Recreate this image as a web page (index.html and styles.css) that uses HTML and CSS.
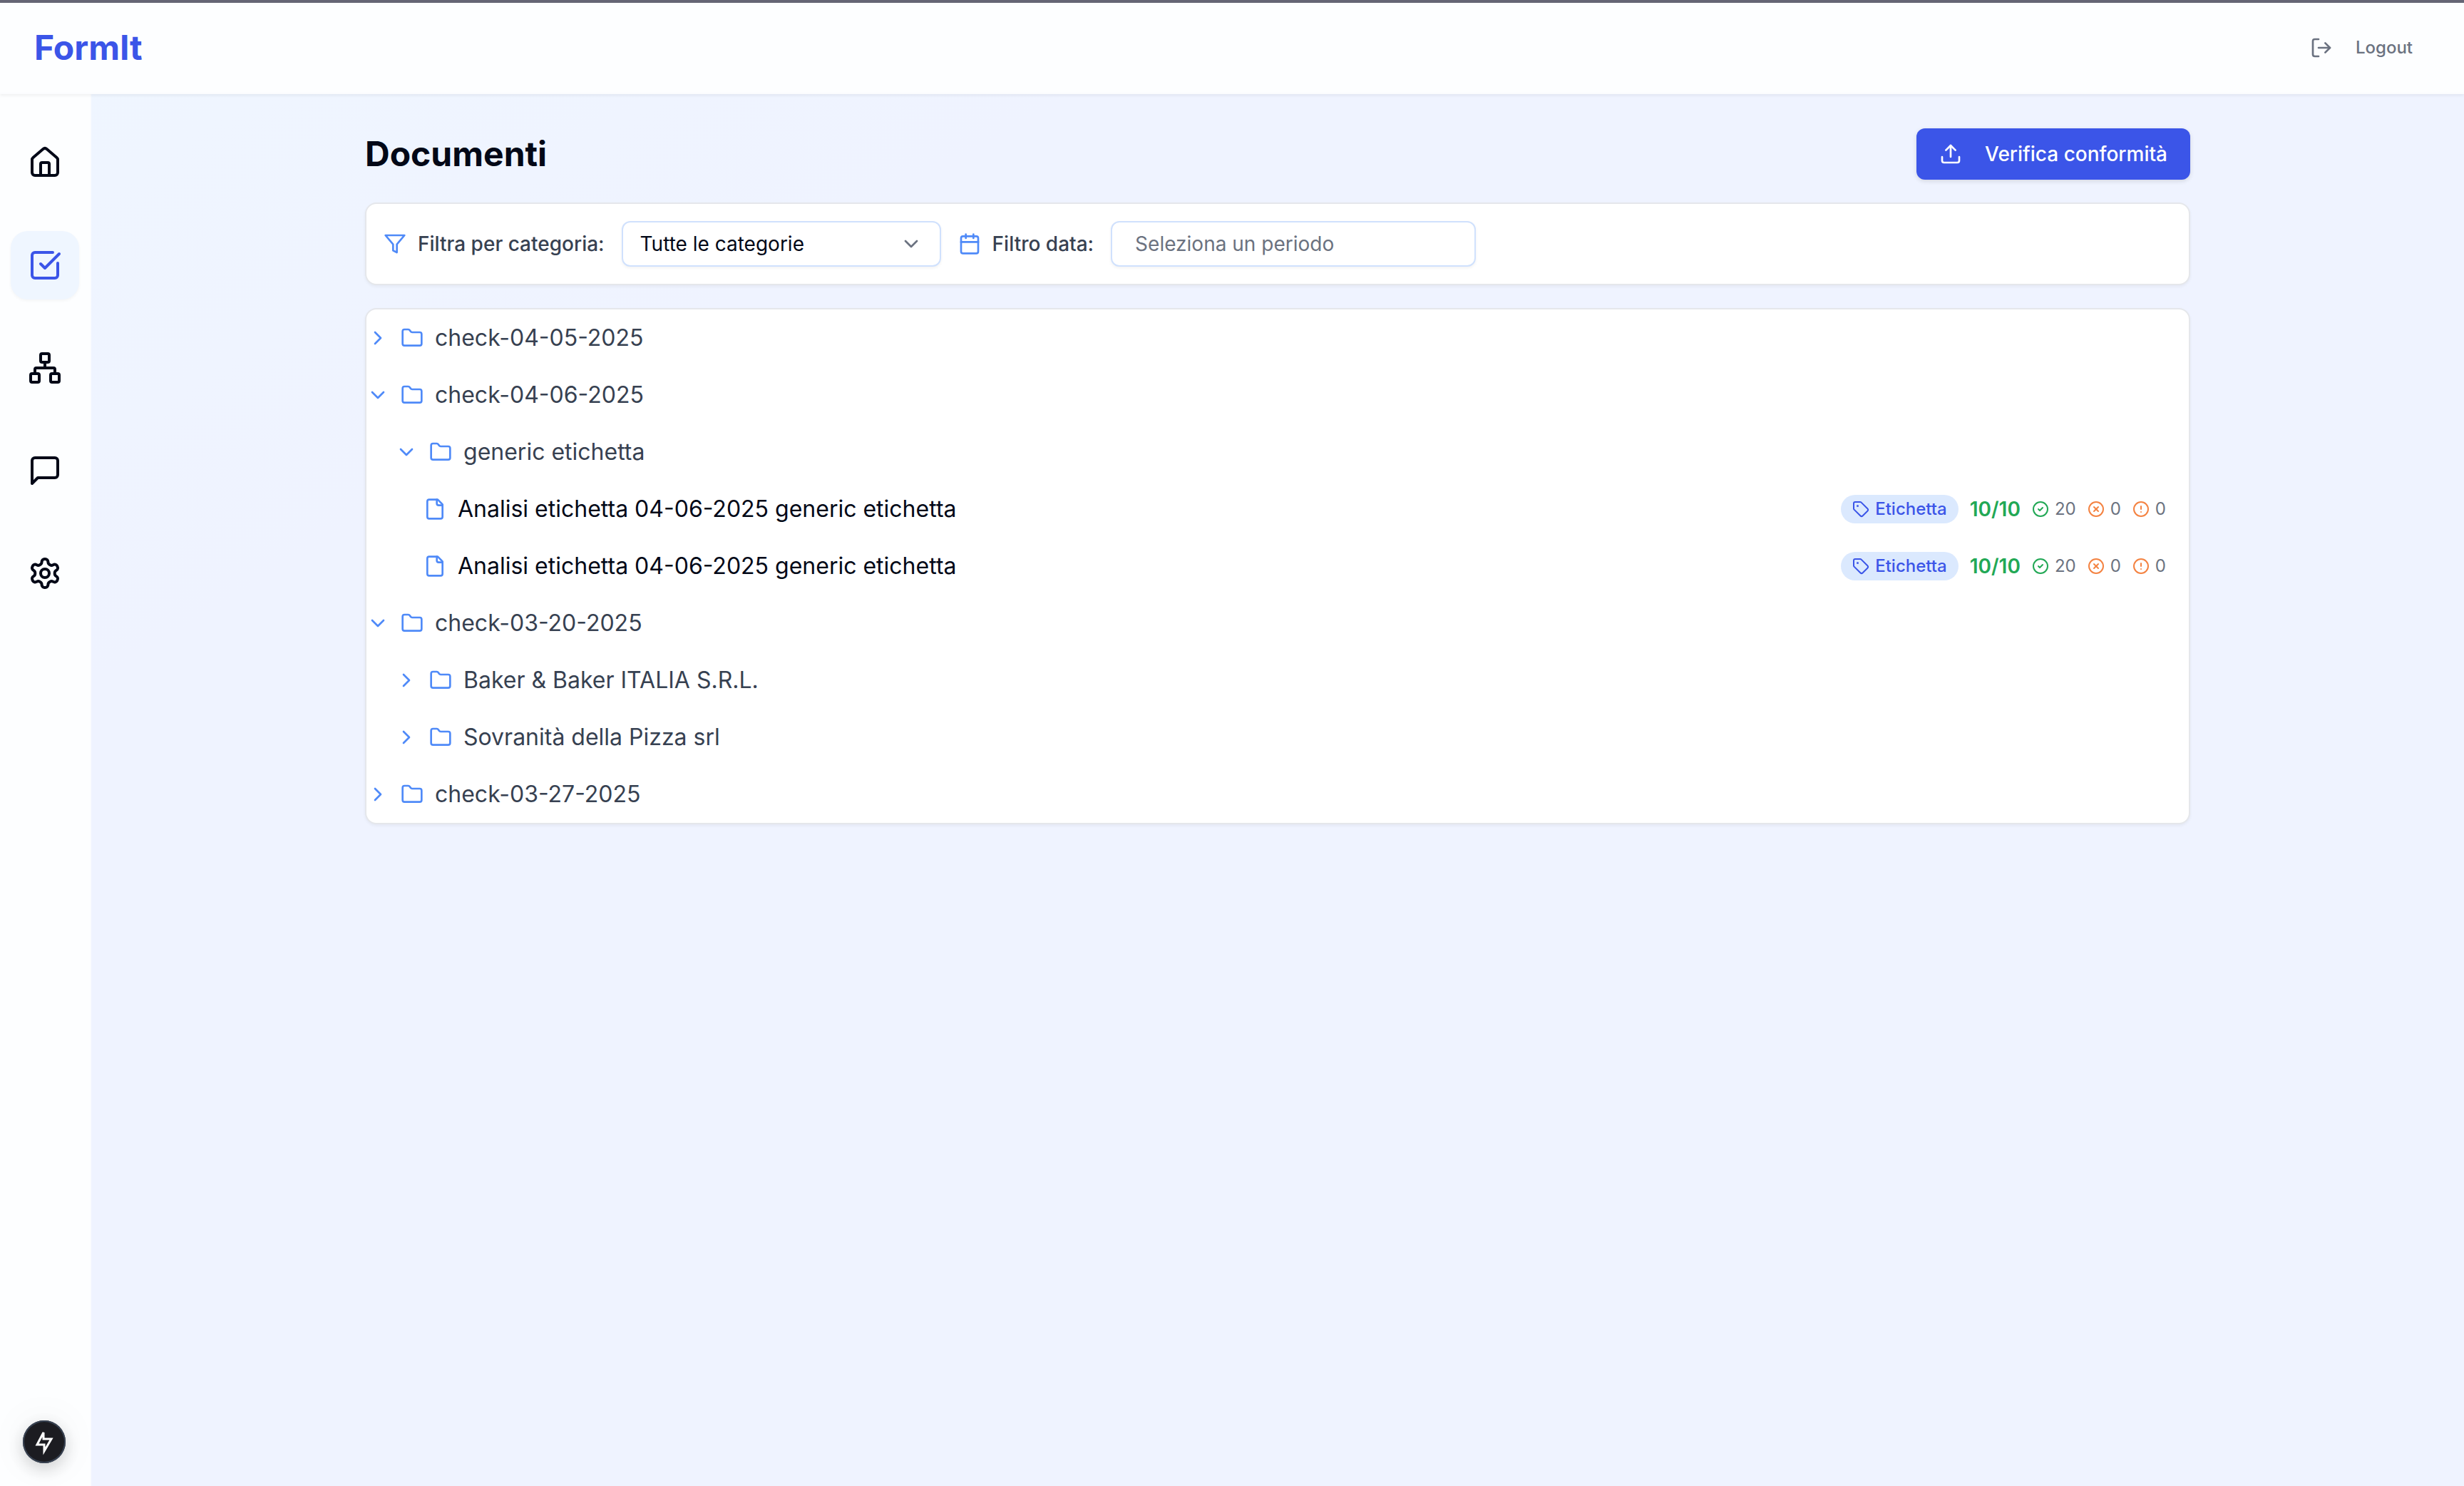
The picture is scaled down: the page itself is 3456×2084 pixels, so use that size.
FILE: index.html
```html
<!DOCTYPE html>
<html lang="it">
<head>
  <meta charset="UTF-8" />
  <meta name="viewport" content="width=device-width, initial-scale=1.0" />
  <title>FormIt - Documenti</title>
  <link rel="stylesheet" href="styles.css">
</head>
<body>
  <!-- Icon set -->
  <svg class="sprite" aria-hidden="true">
    <symbol id="i-house" viewBox="0 0 24 24"><path d="M15 21v-8a1 1 0 0 0-1-1h-4a1 1 0 0 0-1 1v8"/><path d="M3 10a2 2 0 0 1 .709-1.528l7-5.999a2 2 0 0 1 2.582 0l7 5.999A2 2 0 0 1 21 10v9a2 2 0 0 1-2 2H5a2 2 0 0 1-2-2z"/></symbol>
    <symbol id="i-check-square" viewBox="0 0 24 24"><path d="M21 10.5V19a2 2 0 0 1-2 2H5a2 2 0 0 1-2-2V5a2 2 0 0 1 2-2h12.5"/><path d="m9 11 3 3L22 4"/></symbol>
    <symbol id="i-network" viewBox="0 0 24 24"><rect x="16" y="16" width="6" height="6" rx="1"/><rect x="2" y="16" width="6" height="6" rx="1"/><rect x="9" y="2" width="6" height="6" rx="1"/><path d="M5 16v-3a1 1 0 0 1 1-1h12a1 1 0 0 1 1 1v3"/><path d="M12 12V8"/></symbol>
    <symbol id="i-message" viewBox="0 0 24 24"><path d="M21 15a2 2 0 0 1-2 2H7l-4 4V5a2 2 0 0 1 2-2h14a2 2 0 0 1 2 2z"/></symbol>
    <symbol id="i-settings" viewBox="0 0 24 24"><path d="M12.22 2h-.44a2 2 0 0 0-2 2v.18a2 2 0 0 1-1 1.73l-.43.25a2 2 0 0 1-2 0l-.15-.08a2 2 0 0 0-2.73.73l-.22.38a2 2 0 0 0 .73 2.73l.15.1a2 2 0 0 1 1 1.72v.51a2 2 0 0 1-1 1.74l-.15.09a2 2 0 0 0-.73 2.73l.22.38a2 2 0 0 0 2.73.73l.15-.08a2 2 0 0 1 2 0l.43.25a2 2 0 0 1 1 1.73V20a2 2 0 0 0 2 2h.44a2 2 0 0 0 2-2v-.18a2 2 0 0 1 1-1.73l.43-.25a2 2 0 0 1 2 0l.15.08a2 2 0 0 0 2.73-.73l.22-.39a2 2 0 0 0-.73-2.73l-.15-.08a2 2 0 0 1-1-1.74v-.5a2 2 0 0 1 1-1.74l.15-.09a2 2 0 0 0 .73-2.73l-.22-.38a2 2 0 0 0-2.73-.73l-.15.08a2 2 0 0 1-2 0l-.43-.25a2 2 0 0 1-1-1.73V4a2 2 0 0 0-2-2z"/><circle cx="12" cy="12" r="3"/></symbol>
    <symbol id="i-logout" viewBox="0 0 24 24"><path d="M9 21H5a2 2 0 0 1-2-2V5a2 2 0 0 1 2-2h4"/><path d="m16 17 5-5-5-5"/><path d="M21 12H9"/></symbol>
    <symbol id="i-upload" viewBox="0 0 24 24"><path d="M21 15v4a2 2 0 0 1-2 2H5a2 2 0 0 1-2-2v-4"/><path d="m17 8-5-5-5 5"/><path d="M12 3v12"/></symbol>
    <symbol id="i-funnel" viewBox="0 0 24 24"><path d="M22 3H2l8 9.46V19l4 2v-8.54z"/></symbol>
    <symbol id="i-calendar" viewBox="0 0 24 24"><path d="M8 2v4"/><path d="M16 2v4"/><rect x="3" y="4" width="18" height="18" rx="2"/><path d="M3 10h18"/></symbol>
    <symbol id="i-right" viewBox="0 0 24 24"><path d="m9 18 6-6-6-6"/></symbol>
    <symbol id="i-down" viewBox="0 0 24 24"><path d="m6 9 6 6 6-6"/></symbol>
    <symbol id="i-folder" viewBox="0 0 24 24"><path d="M20 20a2 2 0 0 0 2-2V8a2 2 0 0 0-2-2h-7.9a2 2 0 0 1-1.69-.9L9.6 3.9A2 2 0 0 0 7.93 3H4a2 2 0 0 0-2 2v13a2 2 0 0 0 2 2z"/></symbol>
    <symbol id="i-file" viewBox="0 0 24 24"><path d="M15 2H6a2 2 0 0 0-2 2v16a2 2 0 0 0 2 2h12a2 2 0 0 0 2-2V7z"/><path d="M14 2v4a2 2 0 0 0 2 2h4"/></symbol>
    <symbol id="i-tag" viewBox="0 0 24 24"><path d="M12.586 2.586A2 2 0 0 0 11.172 2H4a2 2 0 0 0-2 2v7.172a2 2 0 0 0 .586 1.414l8.704 8.704a2.426 2.426 0 0 0 3.42 0l6.58-6.58a2.426 2.426 0 0 0 0-3.42z"/><circle cx="7.5" cy="7.5" r=".5" fill="currentColor"/></symbol>
    <symbol id="i-ok" viewBox="0 0 24 24"><circle cx="12" cy="12" r="10"/><path d="m9 12 2 2 4-4"/></symbol>
    <symbol id="i-ko" viewBox="0 0 24 24"><circle cx="12" cy="12" r="10"/><path d="m15 9-6 6"/><path d="m9 9 6 6"/></symbol>
    <symbol id="i-warn" viewBox="0 0 24 24"><circle cx="12" cy="12" r="10"/><path d="M12 8v4"/><path d="M12 16h.01"/></symbol>
  </svg>

  <header class="header">
    <a class="brand" href="#">FormIt</a>
    <button class="logout" type="button">
      <svg class="icon"><use href="#i-logout"/></svg>
      Logout
    </button>
  </header>

  <div class="layout">
    <nav class="sidebar" aria-label="Menu">
      <a class="nav-link" href="#" aria-label="Home"><svg class="icon icon-lg"><use href="#i-house"/></svg></a>
      <a class="nav-link active" href="#" aria-label="Documenti"><svg class="icon icon-lg"><use href="#i-check-square"/></svg></a>
      <a class="nav-link" href="#" aria-label="Flussi"><svg class="icon icon-lg"><use href="#i-network"/></svg></a>
      <a class="nav-link" href="#" aria-label="Chat"><svg class="icon icon-lg"><use href="#i-message"/></svg></a>
      <a class="nav-link" href="#" aria-label="Impostazioni"><svg class="icon icon-lg"><use href="#i-settings"/></svg></a>
    </nav>

    <main class="main">
      <div class="container">
        <div class="page-head">
          <h1>Documenti</h1>
          <button class="btn-primary" type="button">
            <svg class="icon"><use href="#i-upload"/></svg>
            Verifica conformità
          </button>
        </div>

        <!-- Filters -->
        <section class="card filters">
          <label class="filter-label" for="category"><svg class="icon blue"><use href="#i-funnel"/></svg>Filtra per categoria:</label>
          <div class="select-wrap">
            <select class="field select" id="category">
              <option>Tutte le categorie</option>
              <option>Etichetta</option>
            </select>
            <svg class="icon select-arrow"><use href="#i-down"/></svg>
          </div>
          <label class="filter-label" for="period"><svg class="icon blue"><use href="#i-calendar"/></svg>Filtro data:</label>
          <input class="field period" id="period" type="text" placeholder="Seleziona un periodo" />
        </section>

        <!-- Document tree -->
        <section class="card tree">
          <button class="row" type="button"><svg class="icon blue"><use href="#i-right"/></svg><svg class="icon blue"><use href="#i-folder"/></svg>check-04-05-2025</button>
          <button class="row" type="button"><svg class="icon blue"><use href="#i-down"/></svg><svg class="icon blue"><use href="#i-folder"/></svg>check-04-06-2025</button>
          <button class="row level-1" type="button"><svg class="icon blue"><use href="#i-down"/></svg><svg class="icon blue"><use href="#i-folder"/></svg>generic etichetta</button>
          <div class="row level-2">
            <svg class="icon blue"><use href="#i-file"/></svg>
            <a class="doc" href="#">Analisi etichetta 04-06-2025 generic etichetta</a>
            <span class="badge"><svg class="icon icon-sm"><use href="#i-tag"/></svg>Etichetta</span>
            <span class="score">10/10</span>
            <span class="count"><svg class="icon icon-sm green"><use href="#i-ok"/></svg>20</span>
            <span class="count"><svg class="icon icon-sm orange"><use href="#i-ko"/></svg>0</span>
            <span class="count"><svg class="icon icon-sm orange"><use href="#i-warn"/></svg>0</span>
          </div>
          <div class="row level-2">
            <svg class="icon blue"><use href="#i-file"/></svg>
            <a class="doc" href="#">Analisi etichetta 04-06-2025 generic etichetta</a>
            <span class="badge"><svg class="icon icon-sm"><use href="#i-tag"/></svg>Etichetta</span>
            <span class="score">10/10</span>
            <span class="count"><svg class="icon icon-sm green"><use href="#i-ok"/></svg>20</span>
            <span class="count"><svg class="icon icon-sm orange"><use href="#i-ko"/></svg>0</span>
            <span class="count"><svg class="icon icon-sm orange"><use href="#i-warn"/></svg>0</span>
          </div>
          <button class="row" type="button"><svg class="icon blue"><use href="#i-down"/></svg><svg class="icon blue"><use href="#i-folder"/></svg>check-03-20-2025</button>
          <button class="row level-1" type="button"><svg class="icon blue"><use href="#i-right"/></svg><svg class="icon blue"><use href="#i-folder"/></svg>Baker &amp; Baker ITALIA S.R.L.</button>
          <button class="row level-1" type="button"><svg class="icon blue"><use href="#i-right"/></svg><svg class="icon blue"><use href="#i-folder"/></svg>Sovranità della Pizza srl</button>
          <button class="row" type="button"><svg class="icon blue"><use href="#i-right"/></svg><svg class="icon blue"><use href="#i-folder"/></svg>check-03-27-2025</button>
        </section>
      </div>
    </main>
  </div>

  <button class="dev-badge" type="button" aria-label="Dev tools">
    <svg class="bolt" viewBox="0 0 60 60"><path d="M29 17 L20 34 H30 V43 L40 26 H29 Z"/></svg>
  </button>
</body>
</html>
```

FILE: styles.css
```css
/* --- Reset & base --- */
* { box-sizing: border-box; margin: 0; padding: 0; }
body {
  min-height: 100vh;
  display: flex;
  flex-direction: column;
  font-family: Inter, "Liberation Sans", sans-serif;
  font-size: 32px;
  line-height: 48px;
  color: #020817;
  background: linear-gradient(to bottom right, #eff6ff, #eff3ff 25%);
  border-top: 4px solid #656575;
}
a { color: inherit; text-decoration: none; }
button, input, select { font: inherit; color: inherit; border: none; background: none; }
button { cursor: pointer; }

/* --- Icons --- */
.sprite { display: none; }
.icon {
  width: 32px; height: 32px; flex: none;
  fill: none; stroke: currentColor; stroke-width: 2;
  stroke-linecap: round; stroke-linejoin: round;
}
.icon-lg { width: 48px; height: 48px; }
.icon-sm { width: 24px; height: 24px; }
.blue { color: #4f8af8; }
.green { color: #22a855; }
.orange { color: #f48342; }

/* --- Header --- */
.header {
  position: relative;
  z-index: 2;
  height: 128px;
  padding: 0 48px;
  display: flex;
  align-items: center;
  justify-content: space-between;
  background: #fdfeff;
  border-bottom: 2px solid #fbfcfe;
  box-shadow: 0 2px 4px rgba(0,0,0,.06);
}
.brand { font-size: 48px; font-weight: 700; color: #3b55e8; }
.logout {
  display: flex; align-items: center; gap: 32px;
  padding: 0 24px; height: 72px;
  font-size: 24px; font-weight: 500; color: #6b7280;
}

/* --- Layout --- */
.layout { flex: 1; display: flex; }
.sidebar {
  flex: none;
  width: 128px;
  padding: 48px 0;
  display: flex;
  flex-direction: column;
  align-items: center;
  gap: 48px;
  background: #fdfeff;
  border-right: 2px solid #fbfcfe;
}
.nav-link {
  width: 96px; height: 96px;
  display: flex; align-items: center; justify-content: center;
  border-radius: 24px;
}
.nav-link.active { color: #3b55e8; background: #eff6ff; box-shadow: 0 2px 4px rgba(0,0,0,.04); }
.main { flex: 1; padding: 48px; }
.container { max-width: 2560px; margin: 0 auto; display: flex; flex-direction: column; gap: 32px; }

/* --- Page head --- */
.page-head { display: flex; align-items: center; justify-content: space-between; }
.page-head h1 { font-size: 48px; font-weight: 700; line-height: 64px; }
.btn-primary {
  height: 72px;
  padding: 0 32px;
  display: flex; align-items: center; gap: 32px;
  font-size: 28px; font-weight: 500;
  color: #fff; background: #3b55e8;
  border-radius: 12px;
  box-shadow: 0 2px 6px rgba(0,0,0,.12);
}

/* --- Cards & filters --- */
.card {
  background: #fff;
  border: 2px solid #e5e7eb;
  border-radius: 16px;
  box-shadow: 0 2px 4px rgba(0,0,0,.05);
}
.filters { display: flex; align-items: center; gap: 24px; padding: 24px; }
.filter-label {
  display: flex; align-items: center; gap: 16px;
  font-size: 28px; font-weight: 500; color: #374151;
}
.field {
  height: 64px;
  font-size: 28px;
  background: #fff;
  border: 2px solid #d0e1fd;
  border-radius: 12px;
  box-shadow: 0 2px 4px rgba(0,0,0,.05);
}
.select-wrap { position: relative; width: 448px; }
.select { display: block; width: 100%; padding: 0 24px; appearance: none; }
.select-arrow { position: absolute; right: 26px; top: 16px; color: #6b7280; pointer-events: none; }
.period { width: 512px; padding: 0 32px; }
.period::placeholder { color: #6b7280; opacity: 1; }

/* --- Tree --- */
.tree { overflow: hidden; }
.row {
  width: 100%;
  height: 80px;
  padding-right: 32px;
  display: flex; align-items: center; gap: 16px;
  text-align: left;
  color: #374151;
}
.level-1 { padding-left: 40px; }
.level-2 { padding-left: 80px; }
.doc { flex: 1; color: #020817; }
.badge {
  display: flex; align-items: center; gap: 8px;
  height: 40px; padding: 0 16px;
  font-size: 24px; font-weight: 500;
  color: #3b55e8; background: #dbe9fe;
  border-radius: 20px;
}
.score { font-size: 28px; font-weight: 600; color: #22a855; }
.count { display: flex; align-items: center; gap: 8px; font-size: 24px; color: #6b7280; }

/* --- Floating dev badge --- */
.dev-badge {
  position: fixed;
  left: 32px; bottom: 32px;
  width: 60px; height: 60px;
  border-radius: 50%;
  background: #1c1c21;
  box-shadow: inset 0 0 0 2px #374151, 0 8px 24px rgba(0,0,0,.18), 0 0 60px rgba(0,0,0,.06);
}
.bolt { display: block; width: 60px; height: 60px; fill: none; stroke: #fff; stroke-width: 3; }
```
